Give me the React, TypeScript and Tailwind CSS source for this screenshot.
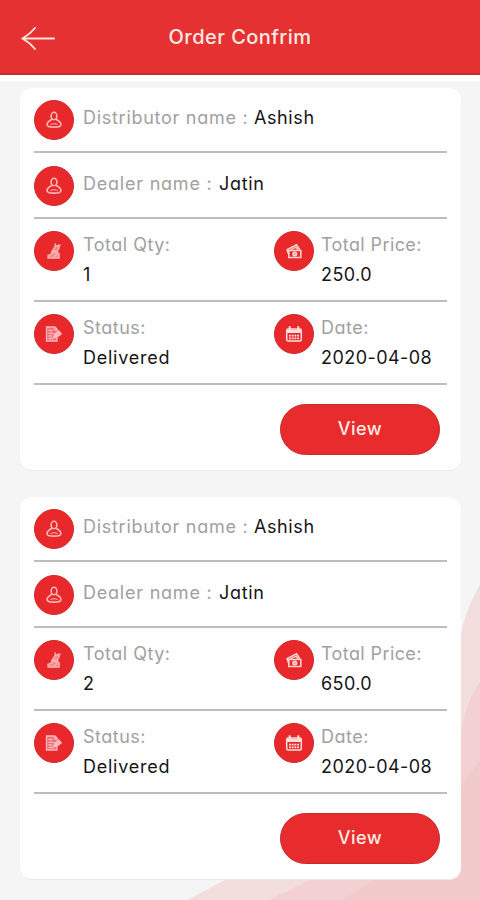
import type { ReactNode } from 'react';
import { clsx } from 'clsx';

interface Order {
  id: number;
  distributor: string;
  dealer: string;
  qty: string;
  price: string;
  status: string;
  date: string;
}

const orders: Order[] = [
  { id: 1, distributor: 'Ashish', dealer: 'Jatin', qty: '1', price: '250.0', status: 'Delivered', date: '2020-04-08' },
  { id: 2, distributor: 'Ashish', dealer: 'Jatin', qty: '2', price: '650.0', status: 'Delivered', date: '2020-04-08' },
];

function UserIcon() {
  return (
    <svg viewBox="0 0 20 20" className="size-5" fill="none" stroke="#ffb9b4" strokeWidth="1.6">
      <ellipse cx="10" cy="6" rx="2.9" ry="3.7" />
      <path d="M8 9.3C5 11 3 12.2 3 14.4c0 1.8 3.1 2.7 7 2.7s7-.9 7-2.7c0-2.2-2-3.4-5-5.1" />
      <path d="M6.2 14.9c1.8-1.6 5.8-1.6 7.6 0" strokeWidth="1" />
    </svg>
  );
}

function QtyIcon() {
  return (
    <svg viewBox="0 0 20 20" className="size-5" fill="none" stroke="#ffb3b1" strokeWidth="1.3">
      <path d="M4 17h11.2v-4L12.5 9.5 8 10.3l-1 3-3 .9z" fill="#f58a88" />
      <path d="M8.5 9.5 11 5.5l2.5-1 2.3-.2-1.2 3.8-1.8 2.4z" fill="#f58a88" />
      <path d="M11.2 2.2v3.2M7 13.5l4-3 2 3-3 2" />
    </svg>
  );
}

function PriceIcon() {
  return (
    <svg viewBox="0 0 20 20" className="size-5" fill="none" stroke="#ffd2cc" strokeWidth="1.6">
      <path d="M4.8 9.5h12v7h-12z" />
      <path d="M2.5 9 12.5 3.8l3.3 5M3 9l1.8 4.5" />
      <circle cx="10.8" cy="13" r="1.8" fill="#f79a96" />
      <path d="m6.5 9 5.5-2.8L14 9" strokeWidth="1.4" />
    </svg>
  );
}

function StatusIcon() {
  return (
    <svg viewBox="0 0 20 20" className="size-5" fill="none" stroke="#ffb8bd" strokeWidth="1.3">
      <path d="M13 7V5l-2.2-2H2.5v14H13v-3.5" fill="#ef6a6f" />
      <path d="M10.5 3v2.8H13M4.5 6.5h4M4.5 9.3h5M4.5 12H8M4.5 14.5h5" />
      <path d="m9.5 13.5.9-3.2L14.8 7l2.4 2.8-4.8 3.7z" fill="#ffb8bd" />
    </svg>
  );
}

function DateIcon() {
  return (
    <svg viewBox="0 0 20 20" className="size-5" fill="none" stroke="#ffe0dc" strokeWidth="1.5">
      <rect x="2.7" y="5" width="14.6" height="12" rx="1.5" />
      <path d="M3 7.5h14" strokeWidth="3" />
      <path d="M5.7 2.3v4M14.3 2.3v4" strokeWidth="2" />
      <path d="M5 11.7h10M5 14.3h10" strokeWidth="1.8" strokeDasharray="1.9 .8" />
    </svg>
  );
}

function IconBadge({ children }: { children: ReactNode }) {
  return (
    <span className="flex size-10 shrink-0 items-center justify-center rounded-full border border-[#cf2a2b] bg-[#e9282b]">
      {children}
    </span>
  );
}

interface NameRowProps {
  label: string;
  value: string;
  labelClass: string;
  valueClass: string;
  className: string;
}

function NameRow({ label, value, labelClass, valueClass, className }: NameRowProps) {
  return (
    <div className={clsx('flex items-center border-b-2 border-[#bdbdbf]', className)}>
      <IconBadge>
        <UserIcon />
      </IconBadge>
      <p className="-mt-[3px] ml-[9px] flex whitespace-nowrap text-[18px] leading-6">
        <span className={clsx('text-[#a1a1a1]', labelClass)}>{label}</span>
        <span className={clsx('text-[#161616]', valueClass)}>{value}</span>
      </p>
    </div>
  );
}

interface FieldProps {
  icon: ReactNode;
  label: string;
  value: string;
  labelClass: string;
  valueClass: string;
  gap: string;
}

function Field({ icon, label, value, labelClass, valueClass, gap }: FieldProps) {
  return (
    <div className={clsx('flex', gap)}>
      <IconBadge>{icon}</IconBadge>
      <div className="whitespace-nowrap text-[18px] leading-[30px]">
        <p className={clsx('-mt-px text-[#a1a1a1]', labelClass)}>{label}</p>
        <p className={clsx('text-[#161616]', valueClass)}>{value}</p>
      </div>
    </div>
  );
}

function OrderCard({ order }: { order: Order }) {
  return (
    <section className="h-[383px] rounded-xl border-b border-[#e9e9e9] bg-[#fefefe] px-[14px]">
      <NameRow
        className="h-[65px]"
        label="Distributor name :"
        value={order.distributor}
        labelClass="w-[171px] tracking-[0.72px]"
        valueClass="tracking-[0.6px]"
      />
      <NameRow
        className="h-[66px] pt-px"
        label="Dealer name :"
        value={order.dealer}
        labelClass="w-[136px] tracking-[0.78px]"
        valueClass="tracking-[0.7px]"
      />
      <div className="grid h-[83px] grid-cols-[240px_1fr] border-b-2 border-[#bdbdbf] pt-3">
        <Field icon={<QtyIcon />} label="Total Qty:" value={order.qty} labelClass="tracking-[0.5px]" valueClass="" gap="gap-[9px]" />
        <Field icon={<PriceIcon />} label="Total Price:" value={order.price} labelClass="tracking-[0.4px]" valueClass="tracking-[0.4px]" gap="gap-[7px]" />
      </div>
      <div className="grid h-[83px] grid-cols-[240px_1fr] border-b-2 border-[#bdbdbf] pt-3">
        <Field icon={<StatusIcon />} label="Status:" value={order.status} labelClass="tracking-[0.5px]" valueClass="tracking-[0.75px]" gap="gap-[9px]" />
        <Field icon={<DateIcon />} label="Date:" value={order.date} labelClass="tracking-[0.5px]" valueClass="tracking-[0.45px]" gap="gap-[7px]" />
      </div>
      <div className="flex justify-end pt-[19px] pr-[7px]">
        <button className="h-[51px] w-40 rounded-full border border-[#c72b2c] bg-[#e82c2d] pb-[3px] text-[18px] font-medium tracking-[0.5px] text-[#ffeae3]">
          View
        </button>
      </div>
    </section>
  );
}

// Pink curves in the lower right corner of the screen
function Backdrop() {
  return (
    <svg viewBox="0 0 480 900" className="absolute inset-0 -z-10 h-full w-full">
      <path d="M480 584C468 607 460 625 460 650L400 800L225 880L187 900H480Z" fill="#f3dede" />
      <path d="M480 682C470 697 463 715 461 732L400 820L310 880L269 900H480Z" fill="#f3d0d1" />
      <path d="M480 760C430 830 395 872 342 900H480Z" fill="#f1cbcc" />
    </svg>
  );
}

export default function App() {
  return (
    <div className="relative isolate h-[900px] w-[480px] overflow-hidden bg-[#f5f5f6] font-['Inter','Liberation_Sans',sans-serif] [font-feature-settings:'cv11']">
      <Backdrop />
      <header className="grid h-[75px] grid-cols-[1fr_auto_1fr] items-center border-b-2 border-[#c62c2e] bg-[#e53131]">
        <svg viewBox="0 0 34 26" className="mt-1 ml-[21px] h-[26px] w-[34px]" fill="none" stroke="#ffe2da" strokeWidth="2" strokeLinecap="round">
          <path d="M1.5 12.5H33M14 2C10 7 6 10 1.5 12.5C6 15 10 18 14 23" />
        </svg>
        <h1 className="text-[20px] font-medium tracking-[0.45px] text-[#ffeae3]">Order Confrim</h1>
      </header>
      <div className="h-[6px] bg-white" />
      <main className="flex flex-col gap-[26px] pt-[7px] pr-[19px] pl-5">
        {orders.map((order) => (
          <OrderCard key={order.id} order={order} />
        ))}
      </main>
    </div>
  );
}
